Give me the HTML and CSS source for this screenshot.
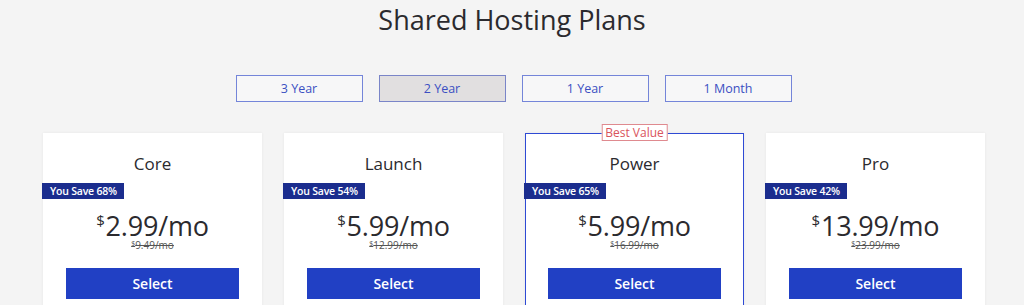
FILE: index.html
```html
<!DOCTYPE html>
<html>
<head>
<meta charset="utf-8">
<link rel="stylesheet" href="styles.css">
</head>
<body>
<main class="page">
  <h1 class="title">Shared Hosting Plans</h1>
  <div class="tabs">
    <button class="tab">3 Year</button>
    <button class="tab tab-active">2 Year</button>
    <button class="tab">1 Year</button>
    <button class="tab">1 Month</button>
  </div>
  <div class="cards">
    <div class="card">
      <div class="plan">Core</div>
      <div class="save">You Save 68%</div>
      <div class="price"><span class="cur">$</span>2.99/mo</div>
      <div class="old"><span class="old-cur">$</span>9.49/mo</div>
      <button class="select">Select</button>
    </div>
    <div class="card">
      <div class="plan">Launch</div>
      <div class="save">You Save 54%</div>
      <div class="price"><span class="cur">$</span>5.99/mo</div>
      <div class="old"><span class="old-cur">$</span>12.99/mo</div>
      <button class="select">Select</button>
    </div>
    <div class="card card-best">
      <div class="best">Best Value</div>
      <div class="plan">Power</div>
      <div class="save">You Save 65%</div>
      <div class="price"><span class="cur">$</span>5.99/mo</div>
      <div class="old"><span class="old-cur">$</span>16.99/mo</div>
      <button class="select">Select</button>
    </div>
    <div class="card">
      <div class="plan">Pro</div>
      <div class="save">You Save 42%</div>
      <div class="price"><span class="cur">$</span>13.99/mo</div>
      <div class="old"><span class="old-cur">$</span>23.99/mo</div>
      <button class="select">Select</button>
    </div>
  </div>
</main>
</body>
</html>
```

FILE: styles.css
```css
html, body {
  margin: 0;
  padding: 0;
  background: #f4f4f4;
  font-family: "Open Sans", "Noto Sans", sans-serif;
  color: #2b2a2e;
  overflow: hidden;
}

.page {
  display: flex;
  flex-direction: column;
  align-items: center;
}

.title {
  margin: 0;
  padding-top: 1px;
  font-size: 27px;
  font-weight: 400;
  line-height: 38px;
  color: #2b2a2e;
}

.tabs {
  display: flex;
  gap: 16px;
  margin-top: 36px;
  padding-left: 3px;
}

.tab {
  width: 127px;
  height: 27px;
  box-sizing: border-box;
  border: 1px solid #7485d9;
  background: #f7f7f8;
  color: #3b4fc2;
  font-family: "Open Sans", "Noto Sans", sans-serif;
  font-size: 12.5px;
  padding: 0;
}

.tab-active {
  background: #e1dfe0;
  border-color: #7a85c8;
}

.cards {
  display: grid;
  grid-template-columns: repeat(4, 219px);
  gap: 22px;
  margin-top: 31px;
  padding-left: 4px;
}

.card {
  position: relative;
  background: #ffffff;
  box-shadow: 0 0 3px rgba(0, 0, 0, 0.06);
  height: 200px;
  box-sizing: border-box;
  border: 1px solid #ffffff;
  display: flex;
  flex-direction: column;
  align-items: center;
  padding-top: 19px;
}

.card-best {
  border-color: #2e4ad4;
}

.best {
  position: absolute;
  top: -10px;
  left: 50%;
  transform: translateX(-50%);
  background: #ffffff;
  border: 1px solid #df8a8f;
  color: #d9545c;
  font-size: 12px;
  line-height: 15px;
  padding: 0 3px;
  white-space: nowrap;
}

.plan {
  font-size: 17px;
  line-height: 22px;
}

.save {
  align-self: flex-start;
  margin-left: -2px;
  margin-top: 8px;
  background: #1b2d8e;
  color: #ffffff;
  font-size: 10.5px;
  font-weight: 600;
  line-height: 16px;
  padding: 0 7px 0 8px;
  letter-spacing: -0.2px;
}

.price {
  margin-top: 13px;
  font-size: 27px;
  line-height: 28px;
  font-weight: 400;
  letter-spacing: -0.2px;
  color: #2b2a2e;
}

.cur {
  font-size: 15px;
  line-height: 0;
  vertical-align: 10px;
  margin-right: 1px;
}

.old {
  margin-top: 0;
  font-size: 10px;
  line-height: 11px;
  color: #555;
  text-decoration: line-through;
}

.old-cur {
  font-size: 7px;
  line-height: 0;
  vertical-align: 3px;
}

.select {
  margin-top: 17px;
  width: 173px;
  height: 31px;
  border: none;
  background: #2140c4;
  color: #ffffff;
  font-family: "Open Sans", "Noto Sans", sans-serif;
  font-size: 14px;
  font-weight: 600;
  padding: 0;
}
```
